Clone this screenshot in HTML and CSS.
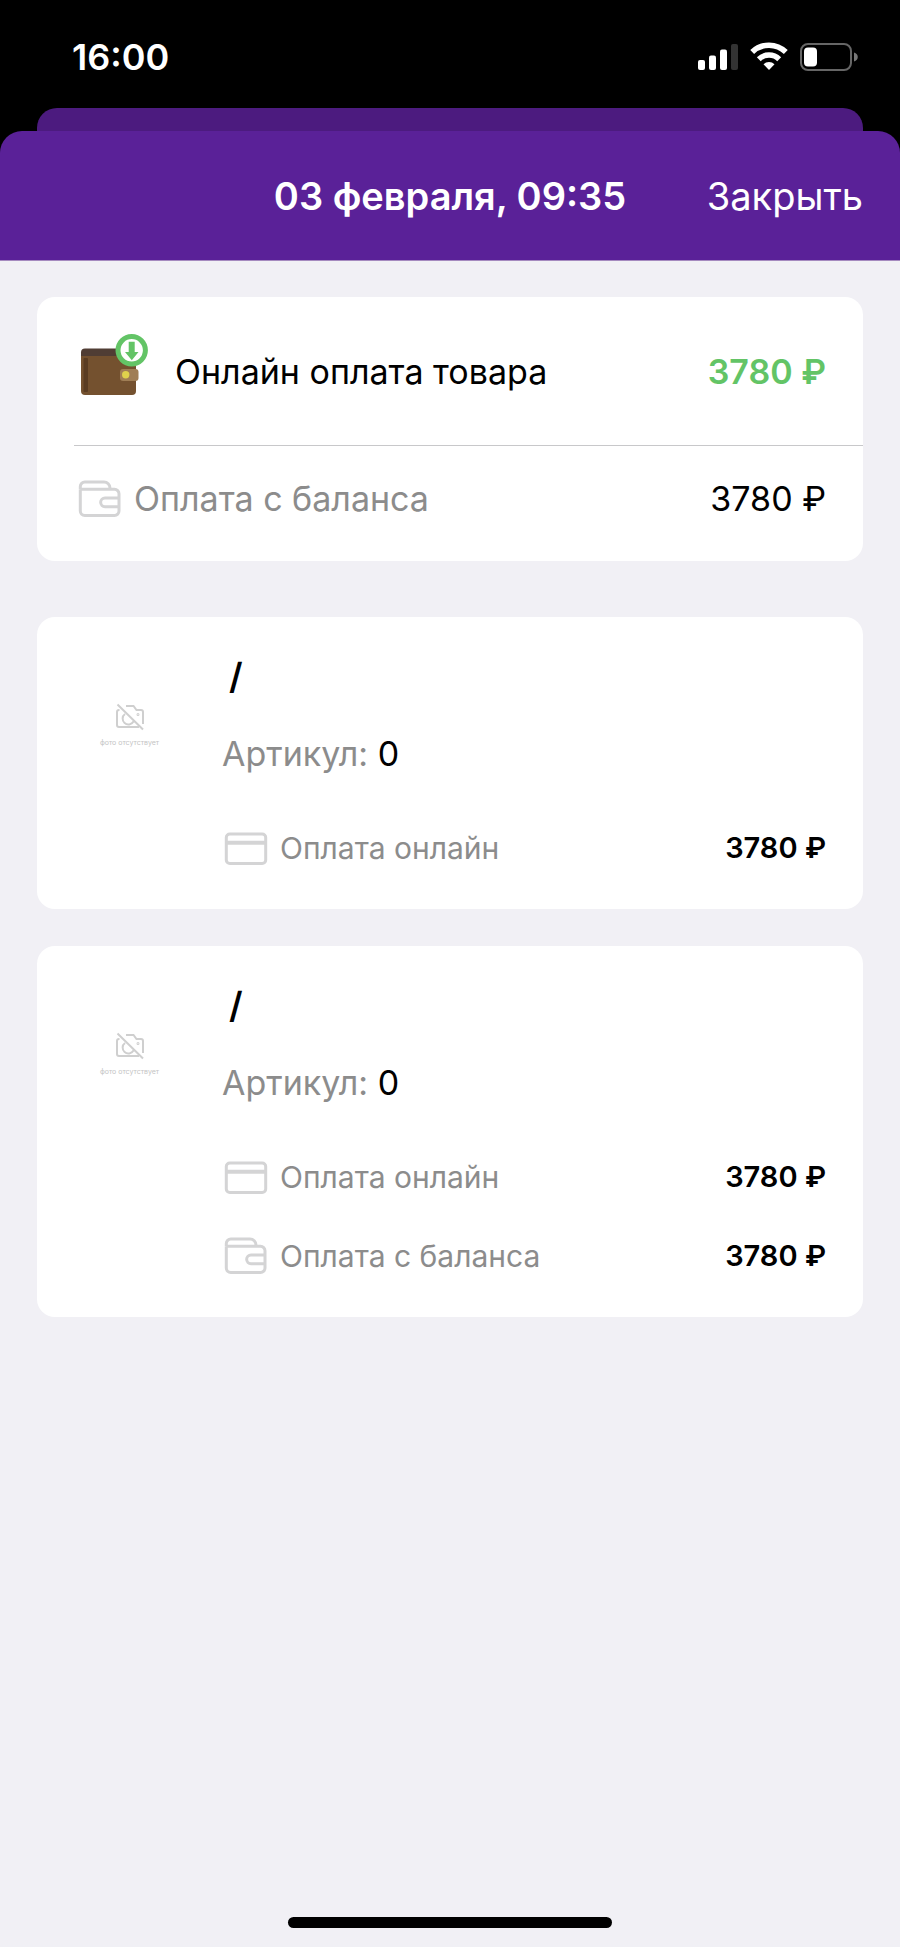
FILE: index.html
```html
<!DOCTYPE html>
<html lang="ru">
<head>
    <meta charset="UTF-8">
    <meta name="viewport" content="width=device-width, initial-scale=1">
    <title>03 февраля, 09:35</title>
    <link rel="stylesheet" href="styles.css">
</head>
<body>
    <!-- shared icons -->
    <svg class="sprite" aria-hidden="true">
        <symbol id="icon-wallet" viewBox="-2 0 46 38">
            <path d="M2.3 9.5V31a4.5 4.5 0 0 0 4.500 4.500H36.500a4.500 4.500 0 0 0 4.500-4.500V13.800a4.500 4.500 0 0 0-4.500-4.500H2.300M2.300 9.300V6.500A4.500 4.500 0 0 1 6.800 2H26a6 6 0 0 1 6 6v1.300M41 18H27a4.350 4.350 0 0 0 0 8.700h14"/>
        </symbol>
        <symbol id="icon-card" viewBox="-2 0 46 38">
            <rect x="2.300" y="5" width="39.400" height="29.500" rx="3.500"/>
            <path d="M2.300 13.700h39.400" stroke-width="4"/>
        </symbol>
        <symbol id="icon-nophoto" viewBox="0 0 30 28">
            <path d="M11 3h7.500l3 4H26a2 2 0 0 1 2 2v12M4.500 7H4a2 2 0 0 0-2 2v13a2 2 0 0 0 2 2h20M10 11a5.800 5.800 0 1 0 8.500 7.500M2.500 1.500l25.500 25"/>
            <circle cx="23" cy="11.500" r="0.500"/>
        </symbol>
    </svg>

    <div class="status">
        <span class="time">16:00</span>
        <div class="indicators">
            <svg width="40" height="30" viewBox="0 0 40 30">
                <g fill="#fff">
                    <rect x="0" y="18" width="7" height="10" rx="2"/>
                    <rect x="11" y="13.500" width="7" height="14.500" rx="2"/>
                    <rect x="22" y="7.500" width="7" height="20.500" rx="2"/>
                </g>
                <rect x="33" y="2" width="7" height="26" rx="2" fill="#333"/>
            </svg>
            <svg width="38" height="30" viewBox="0 0 38 30">
                <g fill="none" stroke="#fff" stroke-width="5.500">
                    <path d="M2.200 10a24 24 0 0 1 33.600 0"/>
                    <path d="M8.800 17.200a14.500 14.500 0 0 1 20.400 0"/>
                </g>
                <path d="M19 28l-5.500-5.700a8 8 0 0 1 11 0z" fill="#fff"/>
            </svg>
            <svg width="58" height="30" viewBox="0 0 58 30">
                <rect x="1" y="2" width="50" height="26" rx="7" fill="none" stroke="#666" stroke-width="2"/>
                <rect x="4" y="5.500" width="13" height="19" rx="4" fill="#fff"/>
                <path d="M54 10.500c5 1.500 5 7.500 0 9z" fill="#777"/>
            </svg>
        </div>
    </div>
    <div class="back-sheet"></div>

    <div class="sheet">
        <header class="header">
            <h1>03 февраля, 09:35</h1>
            <button type="button" class="close">Закрыть</button>
        </header>

        <main class="content">
            <section class="card summary">
                <div class="row total">
                    <svg width="72" height="62" viewBox="-4 0 72 62">
                        <rect x="1" y="14.500" width="50" height="30" rx="4" fill="#503d34"/>
                        <path d="M1 22h52a3 3 0 0 1 3 3v32a4 4 0 0 1-4 4H5a4 4 0 0 1-4-4z" fill="#74512f"/>
                        <rect x="3.500" y="24" width="4.500" height="34" rx="1" fill="#5a3c22"/>
                        <rect x="40" y="35" width="18.500" height="12" rx="3" fill="#a07e55"/>
                        <circle cx="45.700" cy="40.700" r="3.700" fill="#dfd24c"/>
                        <circle cx="51.700" cy="16.300" r="13.700" fill="#fff" stroke="#63c466" stroke-width="5"/>
                        <path d="M48.700 7.700h6V18h3.800l-6.700 8.200L45 18h3.700z" fill="#63c466"/>
                    </svg>
                    <span class="name">Онлайн оплата товара</span>
                    <span class="price">3780 ₽</span>
                </div>
                <div class="row balance">
                    <svg class="icon"><use href="#icon-wallet"/></svg>
                    <span class="name">Оплата с баланса</span>
                    <span class="price">3780 ₽</span>
                </div>
            </section>

            <section class="card product">
                <div class="photo">
                    <svg width="30" height="28"><use href="#icon-nophoto"/></svg>
                    <span>фото отсутствует</span>
                </div>
                <div class="info">
                    <h2>/</h2>
                    <p class="article">Артикул: <b>0</b></p>
                    <div class="row">
                        <svg class="icon"><use href="#icon-card"/></svg>
                        <span class="name">Оплата онлайн</span>
                        <span class="price">3780 ₽</span>
                    </div>
                </div>
            </section>

            <section class="card product">
                <div class="photo">
                    <svg width="30" height="28"><use href="#icon-nophoto"/></svg>
                    <span>фото отсутствует</span>
                </div>
                <div class="info">
                    <h2>/</h2>
                    <p class="article">Артикул: <b>0</b></p>
                    <div class="row">
                        <svg class="icon"><use href="#icon-card"/></svg>
                        <span class="name">Оплата онлайн</span>
                        <span class="price">3780 ₽</span>
                    </div>
                    <div class="row">
                        <svg class="icon"><use href="#icon-wallet"/></svg>
                        <span class="name">Оплата с баланса</span>
                        <span class="price">3780 ₽</span>
                    </div>
                </div>
            </section>
        </main>

        <div class="home-bar"></div>
    </div>
</body>
</html>
```
FILE: styles.css
```css
*{
    margin: 0;
    padding: 0;
    box-sizing: border-box;
}
body{
    display: flex;
    flex-direction: column;
    min-height: 100vh;
    background: #000;
    color: #000;
    font-family: Inter, "Liberation Sans", sans-serif;
    font-size: 34px;
}
svg{
    flex: none;
    display: block;
}
.sprite{
    position: absolute;
    width: 0;
    height: 0;
}

/* status bar */
.status{
    display: flex;
    justify-content: space-between;
    align-items: center;
    height: 108px;
    padding: 6px 42px 0 72px;
    color: #fff;
}
.time{
    font-size: 36px;
    font-weight: 600;
}
.indicators{
    display: flex;
    gap: 12px;
}
.back-sheet{
    height: 23px;
    margin: 0 37px;
    border-radius: 20px 20px 0 0;
    background: #4c1b7f;
}

/* sheet */
.sheet{
    flex: 1;
    display: flex;
    flex-direction: column;
}
.header{
    display: grid;
    grid-template-columns: 1fr auto 1fr;
    align-items: center;
    height: 129px;
    padding: 0 37px;
    border-radius: 22px 22px 0 0;
    background: #5a2198;
    color: #fff;
}
.header h1{
    grid-column: 2;
    font-size: 38px;
    font-weight: 600;
}
.close{
    justify-self: end;
    border: 0;
    background: none;
    color: #fff;
    font: inherit;
    font-size: 38px;
    cursor: pointer;
}
.content{
    flex: 1;
    padding: 36px 37px;
    border-top: 1px solid #a58abf;
    background: #f1f0f5;
}
.card{
    margin-bottom: 37px;
    border-radius: 18px;
    background: #fff;
}
.row{
    display: flex;
    align-items: center;
    gap: 12px;
    height: 78px;
}
.icon{
    width: 46px;
    height: 38px;
    fill: none;
    stroke: #d4d4d5;
    stroke-width: 3;
}
.name{
    flex: 1;
    color: #8c8c8c;
    white-space: nowrap;
}
.price{
    white-space: nowrap;
}

/* summary */
.summary{
    margin-bottom: 56px;
    padding: 0 0 10px 37px;
}
.summary .row{
    padding: 0 37px 0 2px;
}
.summary .total{
    gap: 27px;
    height: 149px;
    border-bottom: 1px solid #c8c8ca;
}
.summary .balance{
    height: 105px;
}
.total svg{
    margin-bottom: 12px;
}
.total .name{
    color: #000;
}
.total .price{
    color: #63c466;
    font-weight: 600;
}

/* product */
.product{
    display: flex;
    gap: 37px;
    padding: 22px 37px;
}
.photo{
    display: flex;
    flex-direction: column;
    align-items: center;
    gap: 7px;
    width: 111px;
    padding-top: 64px;
    color: #c4c4c4;
    font-size: 7px;
    white-space: nowrap;
}
.photo svg{
    fill: none;
    stroke: #cfcfcf;
    stroke-width: 2;
}
.info{
    flex: 1;
    font-size: 30px;
}
.info h2{
    height: 76px;
    padding-left: 7px;
    font-size: 36px;
    font-weight: 600;
    line-height: 74px;
}
.article{
    height: 93px;
    color: #8c8c8c;
    font-size: 34px;
    line-height: 78px;
}
.article b{
    color: #000;
    font-weight: 400;
}
.info .row{
    height: 79px;
}
.info .price{
    font-size: 29px;
    font-weight: 600;
}

.home-bar{
    align-self: center;
    width: 100%;
    padding-bottom: 19px;
    background: #f1f0f5;
}
.home-bar::before{
    content: "";
    display: block;
    width: 36%;
    height: 11px;
    margin: 0 auto;
    border-radius: 6px;
    background: #000;
}
```
